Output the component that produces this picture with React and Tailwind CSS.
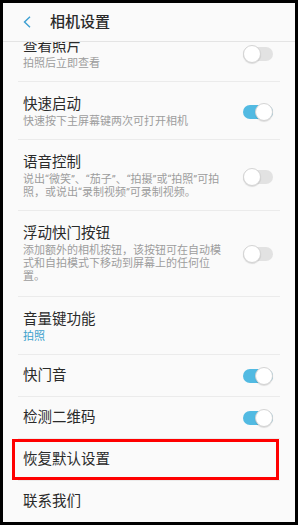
import React from 'react';

const font = { fontFamily: 'Roboto, "Noto Sans CJK SC", sans-serif' };

function Toggle({ on }) {
  return (
    <div className="relative w-[30px] h-[18px] shrink-0">
      <div className={`absolute left-0 right-0 top-[2px] h-[14px] rounded-full ${on ? 'bg-[#52bae2]' : 'bg-[#e2e2e2]'}`} />
      <div
        className={`absolute top-0 w-[18px] h-[18px] rounded-full bg-white border border-[#d4d4d4] shadow-[0_1px_1px_rgba(0,0,0,0.12)] ${on ? 'right-0' : 'left-0'}`}
      />
    </div>
  );
}

function Row({ title, sub, subBlue, toggle, last, extraBottom, children }) {
  const hasSub = !!sub;
  return (
    <div
      className={`relative flex items-center pl-[5px] pr-[7px] ${last ? '' : 'border-b border-[#ebebeb]'} ${
        hasSub ? (extraBottom ? 'pt-[14px] pb-[13px]' : 'pt-[14px] pb-[11px]') : 'pt-[12px] pb-[11px]'
      }`}
    >
      <div className="flex-1 min-w-0 mr-[20px]">
        <div className="text-[14.5px] leading-[18px] text-[#2a2a2a]">{title}</div>
        {hasSub && (
          <div className={`mt-[1px] text-[11px] leading-[13px] ${subBlue ? 'text-[#3ea2cd]' : 'text-[#9d9d9d]'}`}>{sub}</div>
        )}
      </div>
      {toggle !== undefined && <Toggle on={toggle} />}
      {children}
    </div>
  );
}

export default function App() {
  return (
    <div className="w-[298px] h-[525px] bg-black pt-[3px] pl-[3px] pr-[3px] pb-[3px]" style={font}>
      <div className="h-full bg-[#fafafa] overflow-hidden flex flex-col">
        <div className="h-[39px] shrink-0 flex items-center border-b border-[#e4e4e4] bg-[#fafafa] relative z-10">
          <svg width="8" height="12" viewBox="0 0 8 12" className="ml-[20px]">
            <polyline points="7,0.8 1.5,6 7,11.2" fill="none" stroke="#3c9fd2" strokeWidth="1.4" />
          </svg>
          <span className="ml-[19px] text-[15px] font-medium text-[#2a2a2a]">相机设置</span>
        </div>
        <div className="flex-1 overflow-hidden">
          <div className="-mt-[18px] mx-[15px]">
            <Row title="查看照片" sub="拍照后立即查看" toggle={false} />
            <Row title="快速启动" sub="快速按下主屏幕键两次可打开相机" toggle={true} />
            <Row
              title="语音控制"
              sub={
                <>
                  说出“微笑”、“茄子”、“拍摄”或“拍照”可拍
                  <br />
                  照，或说出“录制视频”可录制视频。
                </>
              }
              toggle={false}
            />
            <Row
              title="浮动快门按钮"
              sub="添加额外的相机按钮，该按钮可在自动模式和自拍模式下移动到屏幕上的任何位置。"
              toggle={false}
              extraBottom
            />
            <Row title="音量键功能" sub="拍照" subBlue />
            <Row title="快门音" toggle={true} />
            <Row title="检测二维码" toggle={true} />
            <Row title="恢复默认设置">
              <div className="absolute top-0 bottom-0 -left-[6px] right-[1px] border-[3px] border-[#ff0000]" />
            </Row>
            <Row title="联系我们" last />
          </div>
        </div>
      </div>
    </div>
  );
}
